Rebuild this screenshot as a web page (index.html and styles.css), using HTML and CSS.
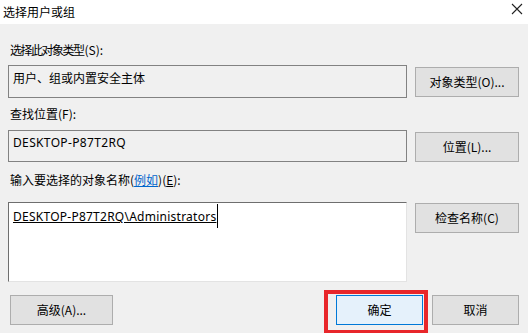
FILE: index.html
```html
<!DOCTYPE html>
<html lang="zh-CN">
<head>
    <meta charset="UTF-8">
    <title>选择用户或组</title>
    <link rel="stylesheet" href="styles.css">
</head>
<body>
    <div class="titlebar">
        <span class="title">选择用户或组</span>
        <svg class="close" width="12" height="12" viewBox="0 0 12 12">
            <path d="M1 1 L11 11 M11 1 L1 11" stroke="#222" stroke-width="1.1" fill="none"/>
        </svg>
    </div>

    <div class="content">
        <div class="label label-first"><span class="tight">选择此对象类型</span>(S):</div>
        <div class="row">
            <div class="field">用户、组或内置安全主体</div>
            <div class="button">对象类型(O)...</div>
        </div>

        <div class="label">查找位置(F):</div>
        <div class="row">
            <div class="field field-loc">DESKTOP-P87T2RQ</div>
            <div class="button">位置(L)...</div>
        </div>

        <div class="label label-names">输入要选择的对象名称(<span class="link">例如</span>)(<u>E</u>):</div>
        <div class="row">
            <div class="field field-input"><span class="entered">DESKTOP-P87T2RQ\Administrators</span><span class="caret"></span></div>
            <div class="button button-check">检查名称(C)</div>
        </div>
    </div>

    <div class="footer">
        <div class="button button-adv">高级(A)...</div>
        <div class="ok-wrap">
            <div class="button button-default">确定</div>
            <div class="highlight"></div>
        </div>
        <div class="button button-small">取消</div>
    </div>
</body>
</html>
```

FILE: styles.css
```css
body {
    margin: 0;
    width: 528px;
    height: 333px;
    overflow: hidden;
    background-color: #f0f0f0;
    font-family: "Noto Sans CJK SC", "Noto Sans", sans-serif;
    font-size: 12px;
    line-height: 16px;
    color: #000;
}

.titlebar {
    height: 24px;
    background-color: #ffffff;
    display: flex;
    align-items: center;
    justify-content: space-between;
    padding: 0 5px 0 3px;
}

.close {
    margin-top: -6px;
}

.content {
    padding: 0 9px 0 8px;
}

.label {
    padding-left: 2px;
    margin-top: 8px;
    margin-bottom: 8px;
}

.label-first {
    margin-top: 18px;
    margin-bottom: 7px;
}

.tight {
    letter-spacing: -1.5px;
    margin-right: 1px;
}

.label-names {
    margin-top: 10px;
    margin-bottom: 14px;
}

.link {
    color: #0066cc;
    text-decoration: underline;
}

.row {
    display: flex;
    gap: 8px;
    align-items: flex-start;
}

.field {
    box-sizing: border-box;
    width: 399px;
    height: 33px;
    border: 1px solid #828282;
    padding: 4px 4px;
}

.field-loc {
    height: 32px;
    font-family: "Noto Sans", sans-serif;
    letter-spacing: 0.35px;
}

.field-input {
    height: 80px;
    background-color: #ffffff;
    border-color: #6e6e6e #e3e3e3 #e3e3e3 #6e6e6e;
    padding-top: 6px;
    font-family: "Noto Sans", sans-serif;
    letter-spacing: 0.25px;
    display: flex;
    align-items: flex-start;
}

.entered {
    text-decoration: underline;
    text-underline-offset: 1px;
}

.caret {
    width: 1px;
    height: 24px;
    margin-top: -5px;
    margin-left: 1px;
    background-color: #000;
}

.button {
    box-sizing: border-box;
    width: 104px;
    height: 30px;
    margin-top: 2px;
    background-color: #e1e1e1;
    border: 1px solid #adadad;
    display: flex;
    align-items: center;
    justify-content: center;
}

.button-check {
    margin-top: 1px;
}

.footer {
    display: flex;
    align-items: flex-start;
    padding: 13px 9px 0 10px;
}

.footer .button {
    margin-top: 0;
}

.button-adv {
    width: 103px;
}

.ok-wrap {
    position: relative;
    margin-left: auto;
    margin-right: 9px;
}

.button-default {
    width: 87px;
    background-color: #e5f1fb;
    border-color: #0078d7;
}

.button-small {
    width: 87px;
}

.highlight {
    position: absolute;
    left: -12px;
    top: -5px;
    width: 104px;
    height: 44px;
    box-sizing: border-box;
    border: 4px solid #e8262a;
}
```
